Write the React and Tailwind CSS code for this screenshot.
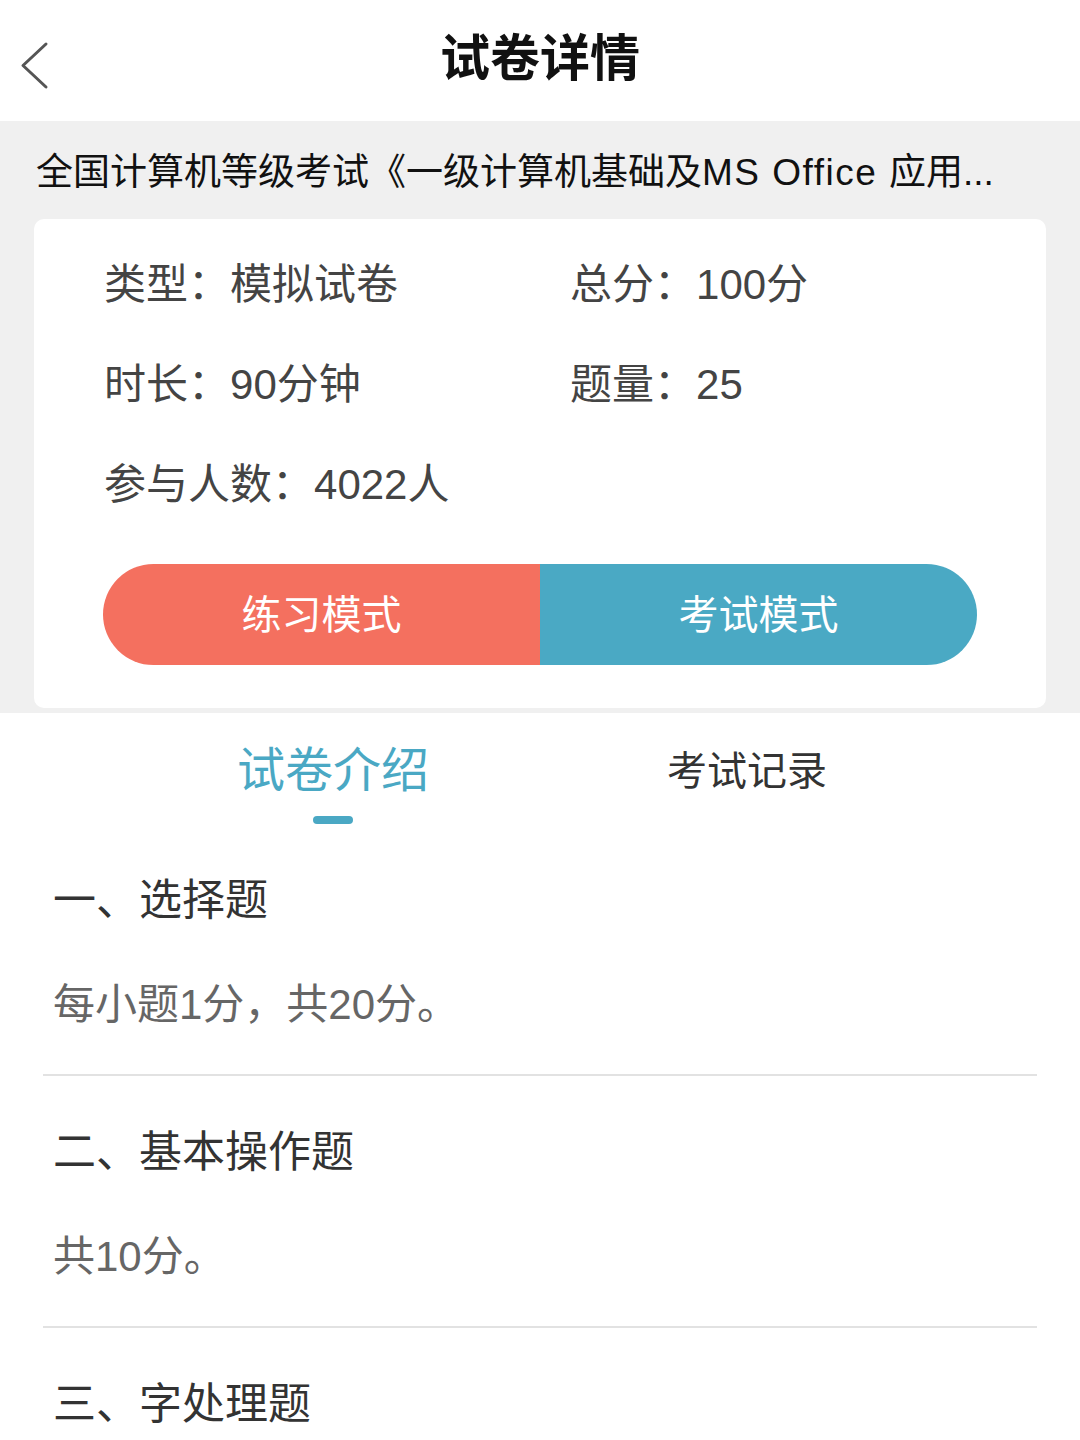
import { useState } from 'react';

const info = [
  [['类型', '模拟试卷'], ['总分', '100分']],
  [['时长', '90分钟'], ['题量', '25']],
  [['参与人数', '4022人']],
];

const sections = [
  { title: '一、选择题', desc: '每小题1分，共20分。' },
  { title: '二、基本操作题', desc: '共10分。' },
  { title: '三、字处理题', desc: '' },
];

function BackIcon() {
  return (
    <svg width="30" height="50" viewBox="0 0 30 50" fill="none" stroke="#555" strokeWidth="3" strokeLinecap="round" strokeLinejoin="round">
      <path d="M26 3 L3 24.5 L26 46" />
    </svg>
  );
}

function App() {
  const [tab, setTab] = useState(0);

  return (
    <div className="min-h-screen bg-white font-['Liberation_Sans','Noto_Sans_CJK_SC',sans-serif]">
      <header className="relative h-[121px] bg-white">
        <button className="absolute left-[20px] top-[41px]">
          <BackIcon />
        </button>
        <h1 className="pt-[29px] text-center text-[50px] font-bold leading-[60px] text-[#111]">试卷详情</h1>
      </header>

      <section className="bg-[#f0f0f0] px-[34px] pb-[5px]">
        <p className="truncate pl-[2px] pt-[29px] pb-[23px] text-[37px] leading-[46px] text-[#111]">
          全国计算机等级考试《一级计算机基础及<span className="tracking-[1.5px]">MS Office </span>应用...
        </p>
        <div className="rounded-[10px] bg-white pt-[16px] pb-[43px]">
          <div className="pl-[70px]">
            {info.map((row, i) => (
              <div key={i} className="flex h-[100px] items-center text-[42px] leading-[50px] text-[#444]">
                {row.map(([k, v]) => (
                  <div key={k} className="w-[466px]">
                    {k}：{v}
                  </div>
                ))}
              </div>
            ))}
          </div>
          <div className="mx-[69px] mt-[29px] flex h-[101px] overflow-hidden rounded-full">
            <button className="flex flex-1 items-center justify-center bg-[#f4705f] text-[40px] text-white">练习模式</button>
            <button className="flex flex-1 items-center justify-center bg-[#4aa9c4] text-[40px] text-white">考试模式</button>
          </div>
        </div>
      </section>

      <nav className="flex h-[111px] justify-center pt-[30px]">
        {['试卷介绍', '考试记录'].map((t, i) => (
          <button key={t} onClick={() => setTab(i)} className="flex w-[414px] flex-col items-center">
            <span
              className={
                tab === i
                  ? 'text-[48px] leading-[56px] text-[#4aa8c4]'
                  : 'text-[40px] leading-[56px] text-[#333]'
              }
            >
              {t}
            </span>
            {tab === i && <span className="mt-[17px] h-[8px] w-[40px] rounded-full bg-[#4aa8c4]" />}
          </button>
        ))}
      </nav>

      <main className="mx-[43px]">
        {sections.map((s, i) => (
          <div key={s.title} className={i === 0 ? 'pt-[26px]' : 'border-t-2 border-[#e2e2e2] pt-[26px]'}>
            <h3 className="flex h-[100px] items-center pl-[10px] text-[43px] text-[#333]">{s.title}</h3>
            {s.desc && (
              <p className="mt-[4px] mb-[20px] flex h-[100px] items-center pl-[10px] text-[42px] text-[#666]">
                {s.desc}
              </p>
            )}
          </div>
        ))}
      </main>
    </div>
  );
}

export default App;
